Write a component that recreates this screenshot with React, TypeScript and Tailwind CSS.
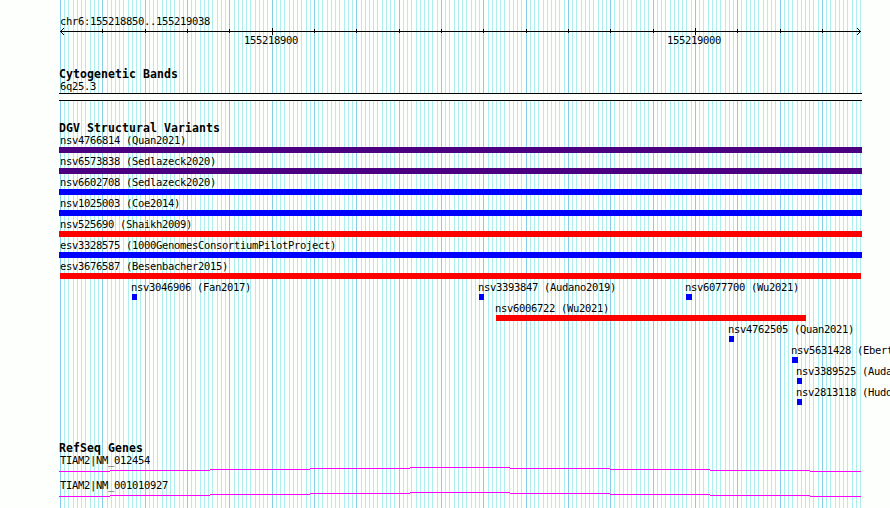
import React from 'react';

interface Variant {
  name: string;
  color: string;
  start: number;
  width: number;
}

interface Gene {
  name: string;
}

const PURPLE = 'bg-[#4b0082]';
const BLUE = 'bg-[#0000ff]';
const RED = 'bg-[#ff0000]';

// each row holds the variants that fit next to each other
const variantRows: Variant[][] = [
  [{ name: 'nsv4766814 (Quan2021)', color: PURPLE, start: 59, width: 803 }],
  [{ name: 'nsv6573838 (Sedlazeck2020)', color: PURPLE, start: 59, width: 803 }],
  [{ name: 'nsv6602708 (Sedlazeck2020)', color: BLUE, start: 59, width: 803 }],
  [{ name: 'nsv1025003 (Coe2014)', color: BLUE, start: 59, width: 803 }],
  [{ name: 'nsv525690 (Shaikh2009)', color: RED, start: 59, width: 803 }],
  [
    {
      name: 'esv3328575 (1000GenomesConsortiumPilotProject)',
      color: BLUE,
      start: 59,
      width: 803,
    },
  ],
  [{ name: 'esv3676587 (Besenbacher2015)', color: RED, start: 60, width: 801 }],
  [
    { name: 'nsv3046906 (Fan2017)', color: BLUE, start: 132, width: 5 },
    { name: 'nsv3393847 (Audano2019)', color: BLUE, start: 479, width: 5 },
    { name: 'nsv6077700 (Wu2021)', color: BLUE, start: 686, width: 6 },
  ],
  [{ name: 'nsv6006722 (Wu2021)', color: RED, start: 496, width: 310 }],
  [{ name: 'nsv4762505 (Quan2021)', color: BLUE, start: 729, width: 5 }],
  [{ name: 'nsv5631428 (Ebert2020)', color: BLUE, start: 792, width: 6 }],
  [{ name: 'nsv3389525 (Audano2019)', color: BLUE, start: 797, width: 5 }],
  [{ name: 'nsv2813118 (Huddleston2016)', color: BLUE, start: 797, width: 5 }],
];

const genes: Gene[] = [{ name: 'TIAM2|NM_012454' }, { name: 'TIAM2|NM_001010927' }];

const BASES = 189;
const baseToX = (base: number) => Math.round(60 + (base * 800) / BASES);
const bases = Array.from({ length: BASES + 1 }, (_, i) => i);
const ticks = bases.filter((base) => base > 0 && base % 10 === 0);

const LABEL =
  "block whitespace-pre font-['DejaVu_Sans_Mono','Liberation_Mono',monospace] text-[10.5px] leading-[12px] tracking-[-0.32px]";

// labels of the full-width features start on the first base
const labelOffset = (start: number) => {
  if (start === 59) return 'ml-px';
  return start === 60 ? '' : '-ml-px';
};

const GridLines: React.FC = () => (
  <svg
    className="absolute inset-0"
    width="890"
    height="508"
    shapeRendering="crispEdges"
  >
    {bases.map((base) => (
      <rect
        key={base}
        x={baseToX(base)}
        y={0}
        width={1}
        height={508}
        fill={base % 10 === 0 ? '#87ceeb' : '#afeeee'}
      />
    ))}
  </svg>
);

const TrackTitle: React.FC<{ children: React.ReactNode }> = ({ children }) => (
  <h2 className="ml-[59px] h-[12px] whitespace-pre font-['DejaVu_Sans_Mono','Liberation_Mono',monospace] text-[11.5px] font-bold leading-[13px] tracking-[0.077px]">
    {children}
  </h2>
);

const Ruler: React.FC = () => (
  <section className="h-[68px] pt-[15px]">
    <span className={`${LABEL} ml-[60px]`}>chr6:155218850..155219038</span>
    <svg
      className="block"
      width="890"
      height="8"
      shapeRendering="crispEdges"
    >
      <rect x="60" y="4" width="801" height="1" />
      {ticks.map((base) => {
        const major = base === 50 || base === 150;
        return (
          <rect
            key={base}
            x={baseToX(base)}
            y={major ? 1 : 2}
            width={1}
            height={major ? 7 : 4}
          />
        );
      })}
      <path d="M61 3h1v1h-1zM62 2h1v1h-1zM63 1h1v1h-1zM61 5h1v1h-1zM62 6h1v1h-1zM63 7h1v1h-1z" />
      <path d="M859 3h1v1h-1zM858 2h1v1h-1zM857 1h1v1h-1zM859 5h1v1h-1zM858 6h1v1h-1zM857 7h1v1h-1z" />
    </svg>
    <div className="-mt-px flex">
      <span className={`${LABEL} ml-[244px] w-[423px]`}>155218900</span>
      <span className={LABEL}>155219000</span>
    </div>
  </section>
);

const VariantRow: React.FC<{ variants: Variant[] }> = ({ variants }) => (
  <div className="grid h-[21px]">
    {variants.map((variant) => (
      <div
        key={variant.name}
        className="col-start-1 row-start-1"
        style={{ marginLeft: variant.start }}
      >
        <span className={`${LABEL} mb-px ${labelOffset(variant.start)}`}>
          {variant.name}
        </span>
        <div
          className={`h-[6px] ${variant.color}`}
          style={{ width: variant.width }}
        />
      </div>
    ))}
  </div>
);

const GeneRow: React.FC<{ gene: Gene }> = ({ gene }) => (
  <div className="h-[25px]">
    <span className={`${LABEL} ml-[60px]`}>{gene.name}</span>
    <svg
      className="block"
      width="890"
      height="6"
      fill="#ff00ff"
      shapeRendering="crispEdges"
    >
      <rect x="59" y="5" width="51" height="1" />
      <rect x="110" y="4" width="100" height="1" />
      <rect x="210" y="3" width="100" height="1" />
      <rect x="310" y="2" width="100" height="1" />
      <rect x="410" y="1" width="100" height="1" />
      <rect x="510" y="2" width="100" height="1" />
      <rect x="610" y="3" width="100" height="1" />
      <rect x="710" y="4" width="100" height="1" />
      <rect x="810" y="5" width="51" height="1" />
    </svg>
  </div>
);

const App: React.FC = () => {
  return (
    <div className="relative h-[508px] w-[890px] overflow-hidden bg-[#fdfffc] text-black">
      <GridLines />
      <main className="relative">
        <Ruler />
        <section className="h-[54px]">
          <TrackTitle>Cytogenetic Bands</TrackTitle>
          <span className={`${LABEL} ml-[60px]`}>6q25.3</span>
          <div className="ml-[59px] mt-px h-[8px] w-[803px] border-y border-black bg-[#fdfffc]" />
        </section>
        <section className="h-[320px]">
          <TrackTitle>DGV Structural Variants</TrackTitle>
          {variantRows.map((row) => (
            <VariantRow key={row[0].name} variants={row} />
          ))}
        </section>
        <section>
          <TrackTitle>RefSeq Genes</TrackTitle>
          {genes.map((gene) => (
            <GeneRow key={gene.name} gene={gene} />
          ))}
        </section>
      </main>
    </div>
  );
};

export default App;
